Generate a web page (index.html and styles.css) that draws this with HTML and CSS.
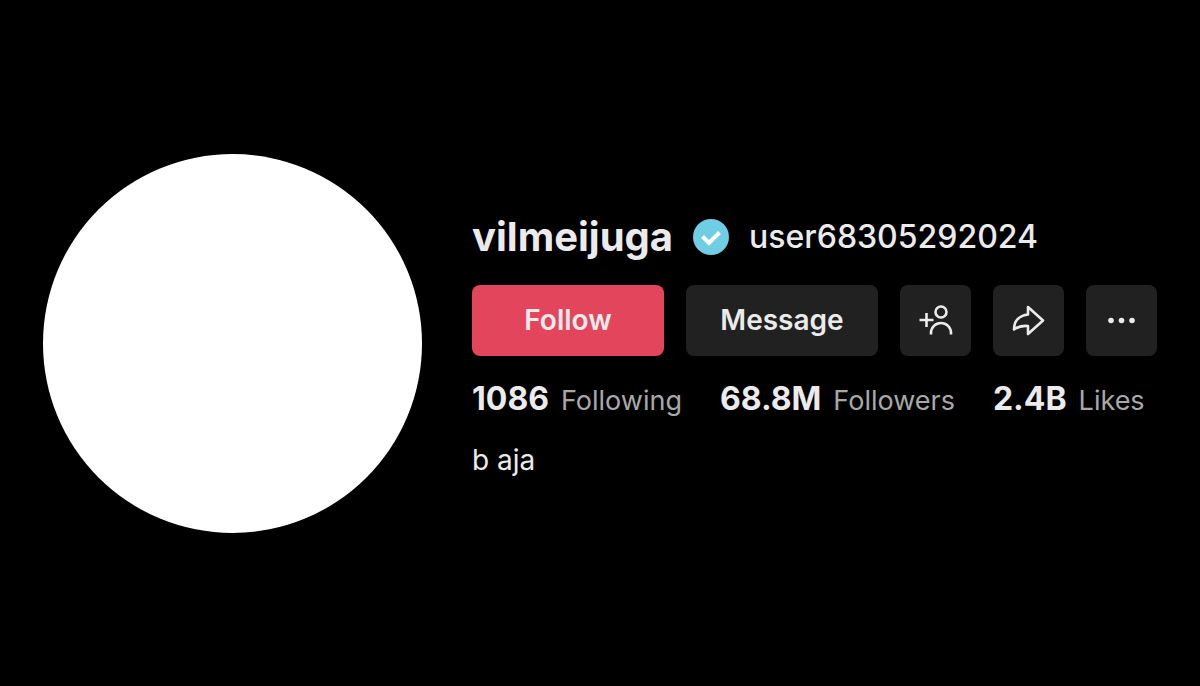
FILE: index.html
```html
<!DOCTYPE html>
<html lang="en">
<head>
  <meta charset="UTF-8">
  <meta name="viewport" content="width=device-width, initial-scale=1.0">
  <title>vilmeijuga</title>
  <link rel="stylesheet" href="styles.css">
</head>
<body>
  <main class="profile">
    <div class="avatar"></div>

    <div class="info">
      <div class="names">
        <h1>vilmeijuga</h1>
        <svg class="verified" viewBox="0 0 36 36">
          <circle cx="18" cy="18" r="18"/>
          <path d="M9.500 17.500l6.500 6.500L26.500 13.500"/>
        </svg>
        <h2>user68305292024</h2>
      </div>

      <div class="actions">
        <button type="button" class="btn follow">Follow</button>
        <button type="button" class="btn">Message</button>
        <button type="button" class="btn icon" aria-label="Add friend">
          <svg viewBox="0 0 36 36">
            <circle cx="23" cy="10" r="5.500"/>
            <path d="M13 32.500v-1.500a10 10 0 0 1 20 0v1.500M1.500 18h14M8.500 11v14"/>
          </svg>
        </button>
        <button type="button" class="btn icon" aria-label="Share">
          <svg viewBox="0 0 36 36">
            <path d="M17 5L32 18.500 17 32V24C11 23.500 7 24.500 3 27.500 3 19 8 13.500 17 12.500z"/>
          </svg>
        </button>
        <button type="button" class="btn icon" aria-label="More">
          <svg class="dots" viewBox="0 0 36 36">
            <circle cx="7" cy="18.500" r="2.800"/>
            <circle cx="17.500" cy="18.500" r="2.800"/>
            <circle cx="28" cy="18.500" r="2.800"/>
          </svg>
        </button>
      </div>

      <div class="stats">
        <div><strong>1086</strong><span>Following</span></div>
        <div><strong>68.8M</strong><span>Followers</span></div>
        <div><strong>2.4B</strong><span>Likes</span></div>
      </div>

      <p class="bio">b aja</p>
    </div>
  </main>
</body>
</html>
```

FILE: styles.css
```css
* {
  box-sizing: border-box;
}
body {
  margin: 0;
  background-color: #000;
  color: #ebebeb;
  font-family: Inter, "Liberation Sans", sans-serif;
}
.profile {
  display: flex;
  align-items: center;
  gap: 50px;
  min-height: 100vh;
  padding: 0 43px;
}
.avatar {
  flex: none;
  width: 379px;
  aspect-ratio: 1;
  border-radius: 50%;
  background-color: #fff;
}
.info {
  flex: 1;
}
.names {
  display: flex;
  align-items: center;
  gap: 20px;
  margin-bottom: 24px;
}
h1,
h2 {
  margin: 0;
  line-height: 48px;
}
h1 {
  font-size: 40px;
  font-weight: 700;
}
h2 {
  font-size: 32px;
  font-weight: 500;
}
.verified {
  flex: none;
  width: 36px;
  height: 36px;
}
.verified circle {
  fill: #6fcde4;
}
.verified path {
  fill: none;
  stroke: #fff;
  stroke-width: 4;
}
.actions {
  display: flex;
  gap: 22px;
  margin-bottom: 24px;
}
.btn {
  width: 192px;
  height: 71px;
  padding: 0;
  border: none;
  border-radius: 8px;
  background-color: #212121;
  color: #ebebeb;
  font-family: inherit;
  font-size: 28px;
  font-weight: 600;
  cursor: pointer;
}
.follow {
  background-color: #e3455c;
}
.icon {
  display: flex;
  align-items: center;
  justify-content: center;
  width: 71px;
}
.icon svg {
  width: 36px;
  height: 36px;
  fill: none;
  stroke: #ebebeb;
  stroke-width: 2.6;
  stroke-linejoin: round;
}
.icon .dots {
  fill: #ebebeb;
  stroke: none;
}
.stats {
  display: flex;
  gap: 38px;
  margin-bottom: 26px;
  line-height: 38px;
}
.stats div {
  display: flex;
  align-items: baseline;
  gap: 12px;
}
.stats strong {
  font-size: 32px;
  font-weight: 700;
}
.stats span {
  color: #a8a8a8;
  font-size: 27px;
}
.bio {
  margin: 0;
  font-size: 28px;
  line-height: 28px;
}
```
